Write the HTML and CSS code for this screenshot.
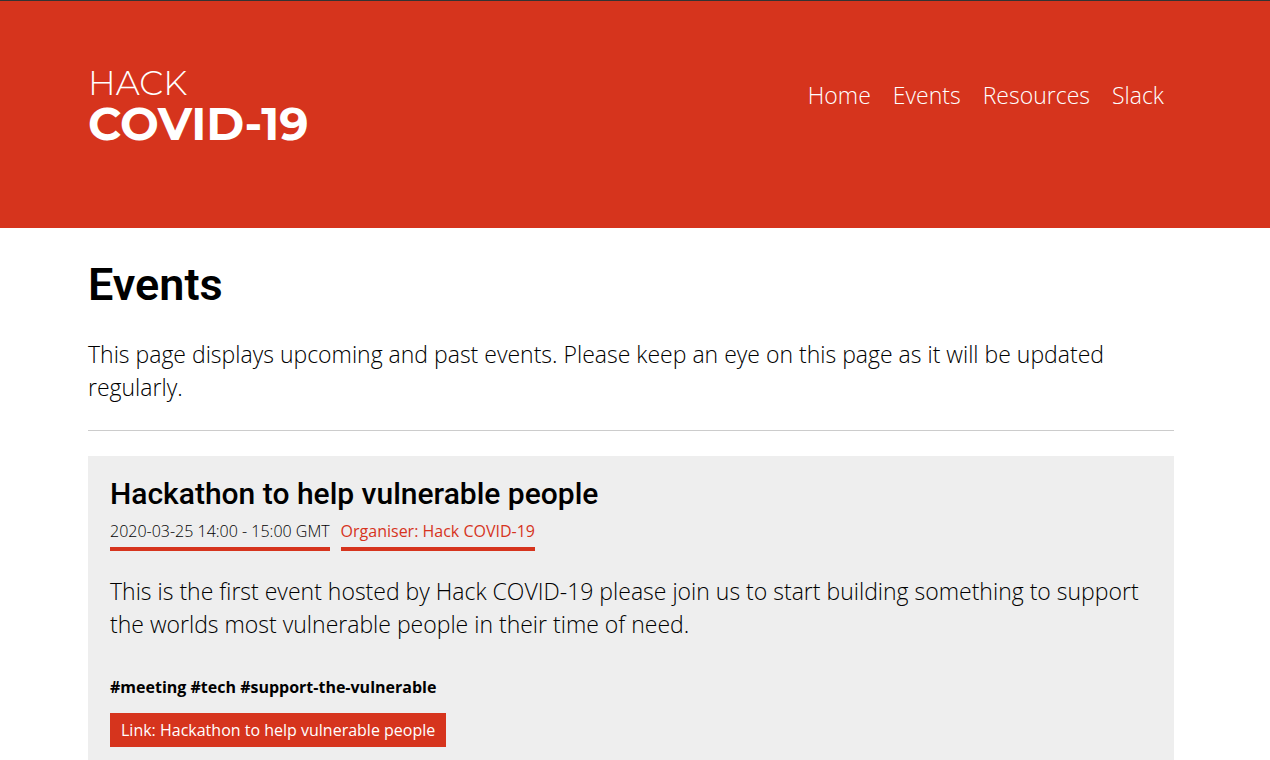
FILE: index.html
```html
<!DOCTYPE html>
<html lang="en">

<head>
  <meta charset="UTF-8" />
  <meta name="viewport" content="width=device-width, initial-scale=1.0" />
  <title>Events | Hack COVID-19</title>
  <link rel="stylesheet" href="styles.css">
</head>

<body>
  <header class="header">
    <div class="container header-inner">
      <a href="#" class="logo">
        <span class="logo-top">HACK</span>
        <span class="logo-bottom">COVID-19</span>
      </a>
      <nav class="nav">
        <a href="#">Home</a>
        <a href="#">Events</a>
        <a href="#">Resources</a>
        <a href="#">Slack</a>
      </nav>
    </div>
  </header>

  <main class="container">
    <h1>Events</h1>
    <p class="intro">This page displays upcoming and past events. Please keep an eye on this page as it will be updated regularly.</p>
    <hr />
    <article class="event">
      <h2>Hackathon to help vulnerable people</h2>
      <div class="event-meta">
        <span class="event-date">2020-03-25 14:00 - 15:00 GMT</span>
        <a href="#" class="event-organiser">Organiser: Hack COVID-19</a>
      </div>
      <p>This is the first event hosted by Hack COVID-19 please join us to start building something to support the worlds most vulnerable people in their time of need.</p>
      <div class="event-tags">#meeting #tech #support-the-vulnerable</div>
      <a href="#" class="event-link">Link: Hackathon to help vulnerable people</a>
    </article>
  </main>
</body>
</html>
```

FILE: styles.css
```css
* {
  box-sizing: border-box;
}

body {
  margin: 0;
  font-family: "Open Sans", sans-serif;
  font-size: 23px;
  font-weight: 300;
  line-height: 33px;
  color: #000;
  background: #fff;
}

.container {
  max-width: 1132px;
  margin: 0 auto;
  padding: 0 27px 0 19px;
}

.header {
  padding: 64px 0 81px;
  color: #fff;
  background: #d6341d;
  border-top: 1px solid #333;
}

.header-inner {
  display: flex;
  justify-content: space-between;
  align-items: flex-start;
}

.logo {
  display: flex;
  flex-direction: column;
  font-family: Montserrat, Inter, sans-serif;
  color: #fff;
  text-decoration: none;
}

.logo-top {
  font-size: 34px;
  font-weight: 300;
  line-height: 36px;
}

.logo-bottom {
  font-size: 46px;
  font-weight: 700;
  line-height: 46px;
}

.nav {
  display: flex;
  gap: 22px;
  padding: 14px 10px 0 0;
}

.nav a {
  color: #fff;
  text-decoration: none;
}

h1,
h2 {
  margin: 0;
  font-family: Roboto, sans-serif;
  font-weight: 500;
}

h1 {
  padding-top: 28px;
  font-size: 45px;
  font-weight: 600;
  line-height: 58px;
}

h2 {
  font-size: 30px;
  line-height: 32px;
}

.intro {
  margin: 24px 0 26px;
}

hr {
  margin: 0 0 25px;
  border: 0;
  border-top: 1px solid #ccc;
}

.event {
  padding: 22px;
  background: #eee;
}

.event-meta {
  display: flex;
  flex-wrap: wrap;
  gap: 11px;
  font-size: 16px;
  line-height: 24px;
  padding-top: 9px;
}

.event-date,
.event-organiser {
  padding-bottom: 4px;
  border-bottom: 4px solid #d6341d;
}

.event-organiser {
  font-weight: 400;
  color: #d6341d;
  text-decoration: none;
}

.event p {
  margin: 24px 0 34px;
}

.event-tags {
  margin-bottom: 12px;
  font-size: 16px;
  font-weight: 700;
  line-height: 24px;
}

.event-link {
  display: inline-block;
  padding: 5px 11px;
  font-size: 16px;
  font-weight: 400;
  line-height: 24px;
  color: #fff;
  text-decoration: none;
  background: #d6341d;
}
```
